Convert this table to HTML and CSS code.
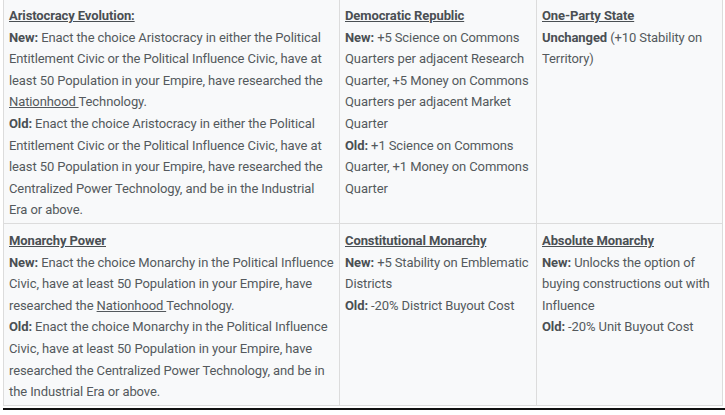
FILE: index.html
```html
<!DOCTYPE html>
<html>
<head>
<meta charset="utf-8">
<link rel="stylesheet" href="styles.css">
</head>
<body>
<table class="changes">
  <colgroup>
    <col class="c1"><col class="c2"><col class="c3">
  </colgroup>
  <tr>
    <td>
      <a class="title">Aristocracy Evolution:</a><br>
      <b>New:</b> Enact the choice Aristocracy in either the Political Entitlement Civic or the Political Influence Civic, have at least 50 Population in your Empire, have researched the <a class="link">Nationhood </a>Technology.<br>
      <b>Old:</b> Enact the choice Aristocracy in either the Political Entitlement Civic or the Political Influence Civic, have at least 50 Population in your Empire, have researched the Centralized Power Technology, and be in the Industrial Era or above.
    </td>
    <td>
      <a class="title">Democratic Republic</a><br>
      <b>New:</b> +5 Science on Commons Quarters per adjacent Research Quarter, +5 Money on Commons Quarters per adjacent Market Quarter<br>
      <b>Old:</b> +1 Science on Commons Quarter, +1 Money on Commons Quarter
    </td>
    <td>
      <a class="title">One-Party State</a><br>
      <b>Unchanged</b> (+10 Stability on Territory)
    </td>
  </tr>
  <tr>
    <td>
      <a class="title">Monarchy Power</a><br>
      <b>New:</b> Enact the choice Monarchy in the Political Influence Civic, have at least 50 Population in your Empire, have researched the <a class="link">Nationhood </a>Technology.<br>
      <b>Old:</b> Enact the choice Monarchy in the Political Influence Civic, have at least 50 Population in your Empire, have researched the Centralized Power Technology, and be in the Industrial Era or above.
    </td>
    <td>
      <a class="title">Constitutional Monarchy</a><br>
      <b>New:</b> +5 Stability on Emblematic Districts<br>
      <b>Old:</b> -20% District Buyout Cost
    </td>
    <td>
      <a class="title">Absolute Monarchy</a><br>
      <b>New:</b> Unlocks the option of buying constructions out with Influence<br>
      <b>Old:</b> -20% Unit Buyout Cost
    </td>
  </tr>
</table>
<div class="rule"></div>
</body>
</html>
```
FILE: styles.css
```css
html, body {
  margin: 0;
  padding: 0;
  background: #ffffff;
}
body {
  font-family: Roboto, "Noto Sans", sans-serif;
  font-size: 13px;
  letter-spacing: -0.1px;
  line-height: 21.6px;
  color: #54595d;
}
.changes {
  margin: -2px 0 0 3px;
  width: 719px;
  table-layout: fixed;
  border-collapse: collapse;
  background: #f8f9fa;
}
.c1 { width: 336px; }
.c2 { width: 197px; }
.c3 { width: 186px; }
.changes td {
  vertical-align: top;
  border: 1px solid #dcdcdc;
  padding: 6px 4px 2px 5px;
}
.changes b {
  font-weight: 700;
  color: #4a4f53;
}
.title {
  font-weight: 700;
  color: #4a4f53;
  text-decoration: underline;
}
.link {
  color: #54595d;
  text-decoration: underline;
}
.rule {
  margin: 2px 0 0 3px;
  border-top: 2px solid #111;
}
```
